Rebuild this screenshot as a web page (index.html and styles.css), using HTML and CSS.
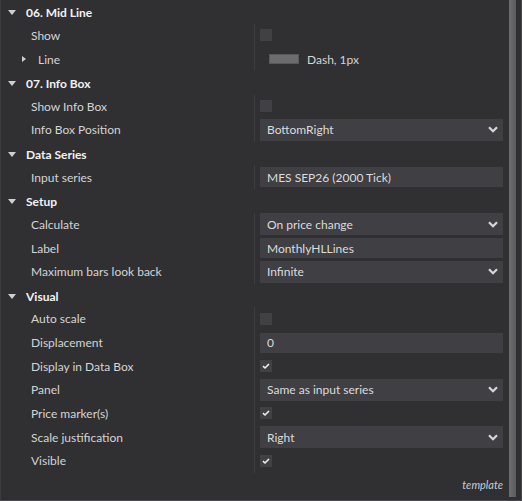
FILE: index.html
```html
<!DOCTYPE html>
<html lang="en">
<head>
    <meta charset="UTF-8" />
    <title>Indicator Properties</title>
    <link rel="stylesheet" href="styles.css">
</head>
<body>
    <div class="panel">
        <div class="props">
            <div class="row header"><span class="caret down"></span>06. Mid Line</div>
            <div class="row"><div class="name">Show</div><div class="value"><span class="check"></span></div></div>
            <div class="row"><div class="name sub"><span class="caret right"></span>Line</div><div class="value"><span class="line-swatch"></span>Dash, 1px</div></div>

            <div class="row header"><span class="caret down"></span>07. Info Box</div>
            <div class="row"><div class="name">Show Info Box</div><div class="value"><span class="check"></span></div></div>
            <div class="row"><div class="name">Info Box Position</div><div class="value"><div class="select">BottomRight<svg class="chev" viewBox="0 0 10 7"><path d="M1 1.2 L5 5.2 L9 1.2"/></svg></div></div></div>

            <div class="row header"><span class="caret down"></span>Data Series</div>
            <div class="row"><div class="name">Input series</div><div class="value"><div class="field">MES SEP26 (2000 Tick)</div></div></div>

            <div class="row header"><span class="caret down"></span>Setup</div>
            <div class="row"><div class="name">Calculate</div><div class="value"><div class="select">On price change<svg class="chev" viewBox="0 0 10 7"><path d="M1 1.2 L5 5.2 L9 1.2"/></svg></div></div></div>
            <div class="row"><div class="name">Label</div><div class="value"><div class="field">MonthlyHLLines</div></div></div>
            <div class="row"><div class="name">Maximum bars look back</div><div class="value"><div class="select">Infinite<svg class="chev" viewBox="0 0 10 7"><path d="M1 1.2 L5 5.2 L9 1.2"/></svg></div></div></div>

            <div class="row header"><span class="caret down"></span>Visual</div>
            <div class="row"><div class="name">Auto scale</div><div class="value"><span class="check"></span></div></div>
            <div class="row"><div class="name">Displacement</div><div class="value"><div class="field">0</div></div></div>
            <div class="row"><div class="name">Display in Data Box</div><div class="value"><span class="check on"><svg viewBox="0 0 12 12"><path d="M3 6.2 L5 8 L9 4"/></svg></span></div></div>
            <div class="row"><div class="name">Panel</div><div class="value"><div class="select">Same as input series<svg class="chev" viewBox="0 0 10 7"><path d="M1 1.2 L5 5.2 L9 1.2"/></svg></div></div></div>
            <div class="row"><div class="name">Price marker(s)</div><div class="value"><span class="check on"><svg viewBox="0 0 12 12"><path d="M3 6.2 L5 8 L9 4"/></svg></span></div></div>
            <div class="row"><div class="name">Scale justification</div><div class="value"><div class="select">Right<svg class="chev" viewBox="0 0 10 7"><path d="M1 1.2 L5 5.2 L9 1.2"/></svg></div></div></div>
            <div class="row"><div class="name">Visible</div><div class="value"><span class="check on"><svg viewBox="0 0 12 12"><path d="M3 6.2 L5 8 L9 4"/></svg></span></div></div>

            <div class="footer">template</div>
        </div>
        <div class="scrollbar"></div>
    </div>
</body>
</html>
```

FILE: styles.css
```css
body {
    margin: 0;
    padding: 0;
    background-color: #303033;
    font-family: Lato, 'Open Sans', sans-serif;
    font-size: 12px;
    color: #d4d4d4;
}

.panel {
    display: flex;
    width: 522px;
    height: 501px;
    box-sizing: border-box;
    border-left: 1px solid #3c3c40;
    border-bottom: 1px solid #4a4a4e;
    border-right: 1px solid #4a4a4e;
    overflow: hidden;
}

.props {
    flex: 1;
    display: flex;
    flex-direction: column;
}

.scrollbar {
    width: 7px;
    margin-right: 5px;
    height: 497px;
    background: linear-gradient(90deg, #6e6e70, #5c5c5e);
}

.row {
    display: grid;
    grid-template-columns: 253px 1fr;
    height: 23.64px;
    align-items: stretch;
}

.row.header {
    display: flex;
    align-items: center;
    padding-left: 7px;
    padding-top: 2px;
    box-sizing: border-box;
    font-weight: bold;
    color: #f2f2f2;
}

.name {
    display: flex;
    align-items: center;
    padding-left: 30px;
}

.name.sub {
    padding-left: 21px;
}

.value {
    display: flex;
    align-items: center;
    border-left: 1px solid #3d3d41;
    padding-left: 5px;
    padding-right: 6px;
}

.caret {
    display: inline-block;
    width: 0;
    height: 0;
}

.caret.down {
    border-left: 4px solid transparent;
    border-right: 4px solid transparent;
    border-top: 5px solid #cfcfcf;
    margin-right: 10px;
}

.caret.right {
    border-top: 3.5px solid transparent;
    border-bottom: 3.5px solid transparent;
    border-left: 4px solid #cfcfcf;
    margin-right: 12px;
}

.check {
    display: inline-block;
    width: 12px;
    height: 12px;
    background-color: #404045;
}

.check svg {
    width: 12px;
    height: 12px;
    display: block;
}

.check path {
    fill: none;
    stroke: #f0f0f0;
    stroke-width: 1.6;
}

.line-swatch {
    display: inline-block;
    width: 28px;
    height: 8px;
    margin-left: 9px;
    margin-right: 8px;
    background-color: #6c6c6e;
    border: 1px solid #58585a;
}

.field,
.select {
    flex: 1;
    display: flex;
    align-items: center;
    height: 20px;
    padding-left: 7px;
    background-color: #3f3f44;
    color: #dcdcdc;
}

.select {
    height: 22px;
    justify-content: space-between;
    padding-right: 5px;
}

.chev {
    width: 10px;
    height: 7px;
}

.chev path {
    fill: none;
    stroke: #d8d8d8;
    stroke-width: 2.2;
}

.footer {
    margin-top: auto;
    text-align: right;
    padding: 0 6px 9px 0;
    font-style: italic;
    font-size: 11px;
    color: #c8ccd4;
}
```
